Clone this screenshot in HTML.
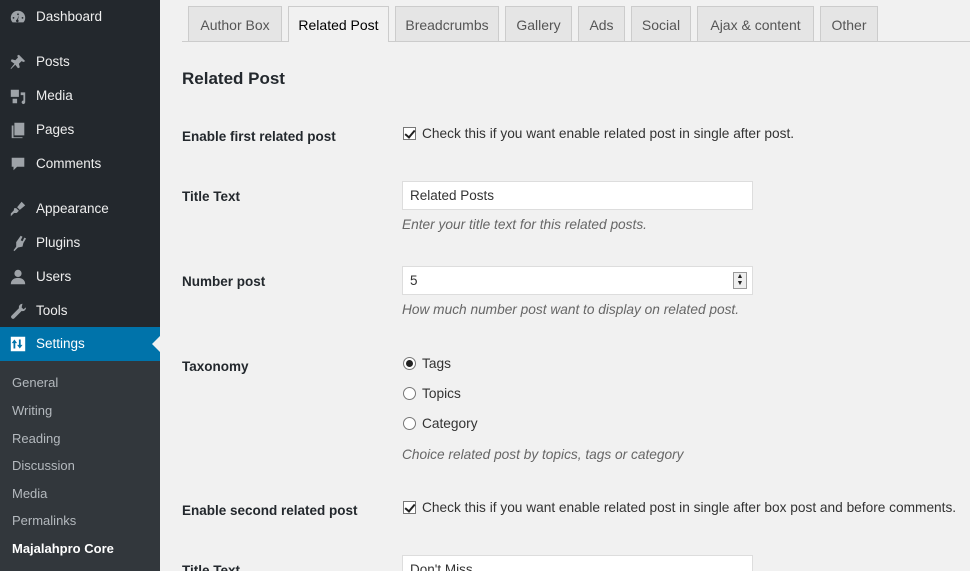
<!DOCTYPE html>
<html style="width:970px;height:571px;overflow:hidden"><head><meta charset="utf-8"><style>
*{box-sizing:border-box;margin:0;padding:0}
body{width:970px;height:571px;overflow:hidden;background:#f1f1f1;font-family:"Liberation Sans",sans-serif;font-size:13px;color:#23282d;position:relative}
#side{position:absolute;left:0;top:0;width:160px;height:571px;background:#23282d}
.mi{position:absolute;left:0;width:160px;height:34px;color:#eee;font-size:13.5px;line-height:34px;padding-left:36px}
.mi svg{position:absolute;left:9px;top:8px;width:18px;height:18px;fill:#9ea3a8}
.cur{background:#0073aa;color:#fff}
.cur svg{fill:#fff}
.arrow{position:absolute;right:0;top:9px;width:0;height:0;border:8px solid transparent;border-right-color:#f1f1f1}
#sub{position:absolute;left:0;top:361px;width:160px;height:210px;background:#32373c}
.si{position:absolute;left:12px;color:#b4b9be;font-size:13px}
.tabs{position:absolute;left:182px;top:41px;width:788px;border-top:1px solid #ccc}
.tab{position:absolute;top:6px;height:35px;border:1px solid #ccc;border-bottom:none;background:#e5e5e5;color:#555;font-size:14px;line-height:36px;text-align:center}
.tab.act{background:#f1f1f1;color:#000;height:36px}
.lbl{position:absolute;left:182px;font-weight:bold;font-size:13.5px;color:#23282d}
.txt{position:absolute;left:402px;font-size:13.7px;color:#333}
.desc{position:absolute;left:402px;font-style:italic;color:#666;font-size:13.7px}
.cb{position:absolute;left:403px;width:13px;height:13px;border:1px solid #777;background:#fff}
.cb:after{content:"";position:absolute;left:3px;top:0px;width:4px;height:8px;border:solid #222;border-width:0 2px 2px 0;transform:rotate(40deg)}
.rd{position:absolute;left:403px;width:13px;height:13px;border:1px solid #777;border-radius:50%;background:#fff}
.rd.on:after{content:"";position:absolute;left:2px;top:2px;width:7px;height:7px;border-radius:50%;background:#222}
.inp{position:absolute;left:402px;width:351px;height:29px;background:#fff;border:1px solid #ddd;padding-left:7px;line-height:27px;font-size:13.5px;color:#333}
</style></head><body>
<div id="side">
<div class="mi" style="top:0"><svg viewBox="0 0 20 20"><path d="M10 3a8 8 0 0 0-8 8c0 2 .7 3.6 2 5h12c1.3-1.4 2-3 2-5a8 8 0 0 0-8-8zm0 3a1 1 0 1 1 0 2 1 1 0 0 1 0-2zM5 10a1 1 0 1 1 0 2 1 1 0 0 1 0-2zm10 0a1 1 0 1 1 0 2 1 1 0 0 1 0-2zm-4-2l-1 5a1.5 1.5 0 1 1-1-.2z"/></svg>Dashboard</div>
<div class="mi" style="top:45px"><svg viewBox="0 0 20 20"><path d="M11 2l7 7-2 1-2-1-3 3 1 4-2 1-3-4-5 5 0-1 4-5-4-3 1-2 4 1 3-3-1-2z"/></svg>Posts</div>
<div class="mi" style="top:79px"><svg viewBox="0 0 20 20"><path d="M2 3h9v8H2zM13 6h5v11c0 1-1 2-2 2s-2-1-2-2 1-2 2-2V9h-3zM4 13h5v5H4z"/></svg>Media</div>
<div class="mi" style="top:113px"><svg viewBox="0 0 20 20"><path d="M6 2h11v14H6zM3 5h2v13h10v1H3z"/></svg>Pages</div>
<div class="mi" style="top:147px"><svg viewBox="0 0 20 20"><path d="M3 3h14v10H9l-4 4v-4H3z"/></svg>Comments</div>
<div class="mi" style="top:192px"><svg viewBox="0 0 20 20"><path d="M14 2l4 4-6 5-3-3zM8 9l3 3-2 2c-1 1-3 0-4 1l-3 3 0-3 3-3c1-1 0-2 1-3z"/></svg>Appearance</div>
<div class="mi" style="top:226px"><svg viewBox="0 0 20 20"><path d="M13 2l2 1-2 4 2 1 2-4 2 1-3 5-1 4-5 1-4 4-1-1 3-4 0-5z"/></svg>Plugins</div>
<div class="mi" style="top:260px"><svg viewBox="0 0 20 20"><circle cx="10" cy="6" r="4"/><path d="M2 18c0-5 4-7 8-7s8 2 8 7z"/></svg>Users</div>
<div class="mi" style="top:294px"><svg viewBox="0 0 20 20"><path d="M15 2a4 4 0 0 0-4 5L3 15a2 2 0 0 0 3 3l8-8a4 4 0 0 0 5-4l-3 2-2-2z"/></svg>Tools</div>
<div class="mi cur" style="top:327px"><svg viewBox="0 0 20 20"><path d="M2 2h16v16H2zM5 9v6h2V9h2L6 5 3 9zm8 2V5h-2v6H9l3 4 3-4z" fill-rule="evenodd"/></svg>Settings<div class="arrow"></div></div>
<div id="sub">
<div class="si" style="top:14px">General</div>
<div class="si" style="top:42px">Writing</div>
<div class="si" style="top:70px">Reading</div>
<div class="si" style="top:97px">Discussion</div>
<div class="si" style="top:125px">Media</div>
<div class="si" style="top:152px">Permalinks</div>
<div class="si" style="top:180px;color:#fff;font-weight:bold">Majalahpro Core</div>
</div>
</div>
<div class="tabs"></div>
<div class="tab" style="left:188px;width:94px">Author Box</div>
<div class="tab act" style="left:288px;width:101px">Related Post</div>
<div class="tab" style="left:395px;width:104px">Breadcrumbs</div>
<div class="tab" style="left:505px;width:67px">Gallery</div>
<div class="tab" style="left:578px;width:47px">Ads</div>
<div class="tab" style="left:631px;width:60px">Social</div>
<div class="tab" style="left:697px;width:117px">Ajax &amp; content</div>
<div class="tab" style="left:820px;width:58px">Other</div>
<div style="position:absolute;left:182px;top:69px;font-size:17px;font-weight:bold;color:#23282d">Related Post</div>
<div class="lbl" style="top:129px">Enable first related post</div>
<div class="cb" style="top:127px"></div>
<div class="txt" style="left:422px;top:126px">Check this if you want enable related post in single after post.</div>
<div class="lbl" style="top:189px">Title Text</div>
<div class="inp" style="top:181px">Related Posts</div>
<div class="desc" style="top:217px">Enter your title text for this related posts.</div>
<div class="lbl" style="top:274px">Number post</div>
<div class="inp" style="top:266px">5<div style="position:absolute;right:5px;top:5px;width:14px;height:17px;border:1px solid #999;background:#eee;font-size:7px;line-height:7px;text-align:center;color:#222">▲<br>▼</div></div>
<div class="desc" style="top:302px">How much number post want to display on related post.</div>
<div class="lbl" style="top:359px">Taxonomy</div>
<div class="rd on" style="top:357px"></div><div class="txt" style="left:422px;top:356px">Tags</div>
<div class="rd" style="top:387px"></div><div class="txt" style="left:422px;top:386px">Topics</div>
<div class="rd" style="top:417px"></div><div class="txt" style="left:422px;top:416px">Category</div>
<div class="desc" style="top:447px">Choice related post by topics, tags or category</div>
<div class="lbl" style="top:503px">Enable second related post</div>
<div class="cb" style="top:501px"></div>
<div class="txt" style="left:422px;top:500px">Check this if you want enable related post in single after box post and before comments.</div>
<div class="lbl" style="top:563px">Title Text</div>
<div class="inp" style="top:555px">Don't Miss</div>
</body></html>
